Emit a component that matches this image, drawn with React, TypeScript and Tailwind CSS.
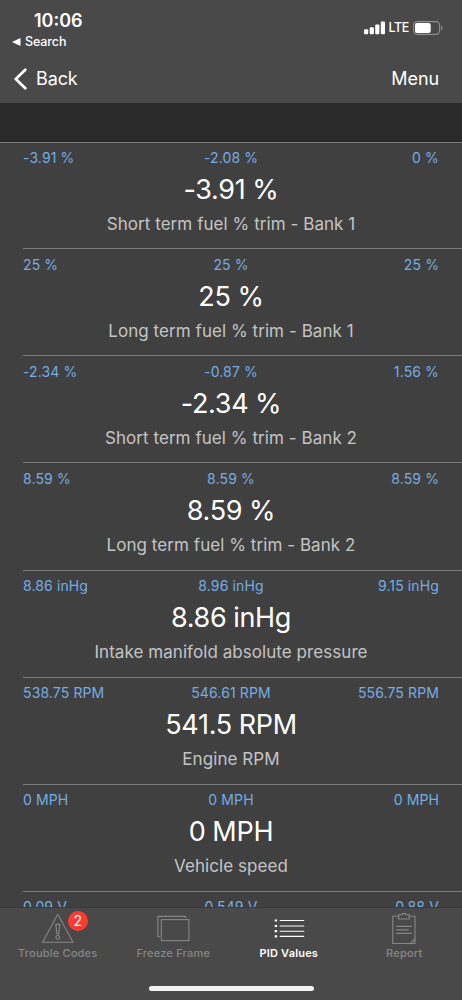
import type { ReactNode } from "react";
import clsx from "clsx";

type Pid = {
  min: string;
  avg: string;
  max: string;
  value: string;
  name: string;
};

const PIDS: Pid[] = [
  { min: "-3.91 %", avg: "-2.08 %", max: "0 %", value: "-3.91 %", name: "Short term fuel % trim - Bank 1" },
  { min: "25 %", avg: "25 %", max: "25 %", value: "25 %", name: "Long term fuel % trim - Bank 1" },
  { min: "-2.34 %", avg: "-0.87 %", max: "1.56 %", value: "-2.34 %", name: "Short term fuel % trim - Bank 2" },
  { min: "8.59 %", avg: "8.59 %", max: "8.59 %", value: "8.59 %", name: "Long term fuel % trim - Bank 2" },
  { min: "8.86 inHg", avg: "8.96 inHg", max: "9.15 inHg", value: "8.86 inHg", name: "Intake manifold absolute pressure" },
  { min: "538.75 RPM", avg: "546.61 RPM", max: "556.75 RPM", value: "541.5 RPM", name: "Engine RPM" },
  { min: "0 MPH", avg: "0 MPH", max: "0 MPH", value: "0 MPH", name: "Vehicle speed" },
  { min: "0.09 V", avg: "0.549 V", max: "0.88 V", value: "", name: "" },
];

function StatusBar() {
  return (
    <div className="flex h-[54px] justify-between">
      <div className="pl-3">
        <div className="mt-[10px] pl-[22px] text-[18px] leading-[22px] font-semibold">10:06</div>
        <div className="mt-px flex items-center gap-1 text-[12.5px] leading-[18px] font-medium tracking-[-0.1px]">
          <svg width="9" height="8" viewBox="0 0 9 8" fill="currentColor">
            <path d="M0 4 8.5 0v8z" />
          </svg>
          Search
        </div>
      </div>
      <div className="mt-[20px] mr-[19px] flex h-4 items-center">
        <svg width="22" height="14" viewBox="0 0 22 14" fill="currentColor">
          <rect x="0" y="8.3" width="4.2" height="5" rx="1" />
          <rect x="5.7" y="6.2" width="4.2" height="7.1" rx="1" />
          <rect x="11.2" y="3.5" width="4.2" height="9.8" rx="1" />
          <rect x="16.8" y="0.6" width="4.2" height="12.7" rx="1" />
        </svg>
        <span className="ml-[3px] text-[12.5px] leading-4 font-medium tracking-[-0.4px]">LTE</span>
        <svg className="ml-[4px]" width="30" height="14" viewBox="0 0 30 14">
          <rect x="0.6" y="0.6" width="26" height="12.8" rx="3.6" fill="none" stroke="#8e8e8e" strokeWidth="1.1" />
          <rect x="2" y="2" width="15.7" height="10" rx="2" fill="#fff" />
          <path d="M28 4.8c1.9.6 1.9 3.8 0 4.4z" fill="#8e8e8e" />
        </svg>
      </div>
    </div>
  );
}

function NavBar() {
  return (
    <div className="flex h-[49px] items-center justify-between pr-[23px] pl-3.5 text-[18px] tracking-[-0.1px] text-white">
      <button className="flex items-center gap-[9px]">
        <svg width="13" height="22" viewBox="0 0 13 22" fill="none" stroke="currentColor" strokeWidth="2.7" strokeLinecap="round" strokeLinejoin="round">
          <path d="M11.3 1.8 1.8 11l9.5 9.2" />
        </svg>
        Back
      </button>
      <button>Menu</button>
    </div>
  );
}

function PidRow({ pid, first }: { pid: Pid; first: boolean }) {
  return (
    <li className={clsx("shrink-0", first ? "h-[106.3px] border-t border-[#7b7b7b]" : "h-[107.1px]")}>
      <div className={clsx("ml-[23px] h-full pr-[23px]", first ? "pt-[5px]" : "border-t border-[#7b7b7b] pt-[5.6px]")}>
        <div className="grid grid-cols-3 text-[14px] leading-5 tracking-[0.12px] text-[#74ade4]">
          <span>{pid.min}</span>
          <span className="text-center">{pid.avg}</span>
          <span className="text-right">{pid.max}</span>
        </div>
        <div className="mt-1 text-center text-[27px] leading-9 tracking-[-0.3px] text-white [word-spacing:-0.5px]">{pid.value}</div>
        <div className="mt-1 text-center text-[17px] leading-6 tracking-[0.06px] text-[#c4c4c4]">{pid.name}</div>
      </div>
    </li>
  );
}

function Tab({ label, active, badge, children }: { label: string; active?: boolean; badge?: number; children: ReactNode }) {
  return (
    <button className={clsx("flex flex-1 flex-col items-center pt-[4px]", active ? "text-white" : "text-[#868686]")}>
      <span className="relative">
        <svg width="34" height="34" viewBox="0 0 34 34" fill="none" stroke="currentColor" strokeWidth="1.1">
          {children}
        </svg>
        {badge && (
          <span className="absolute top-[-1.5px] left-[27px] flex size-5 items-center justify-center rounded-full bg-[#ff3b30] text-[14px] text-white">
            {badge}
          </span>
        )}
      </span>
      <span className={clsx("text-[11px] leading-[14px] tracking-[0.2px] whitespace-nowrap", active ? "font-semibold" : "font-medium")}>{label}</span>
    </button>
  );
}

function TabBar() {
  return (
    <nav className="h-[93px] shrink-0 border-t border-[#3a3a3a] bg-[#494949]">
      <div className="flex h-[78px]">
        <Tab label="Trouble Codes" badge={2}>
          <path d="M16.8 2.3 32 30.3H1.6z" strokeLinejoin="round" />
          <path d="M14.8 12.4h4l-1.1 9.6h-1.8z" />
          <circle cx="16.8" cy="25.4" r="1.9" />
        </Tab>
        <Tab label="Freeze Frame">
          <path d="M4.2 24.8H1.9V4.4h27.7v1.8" />
          <rect x="5.3" y="7.6" width="27.6" height="21" />
        </Tab>
        <Tab label="PID Values" active>
          <path d="M7.7 8.5h24.5M7.7 14h24.5M7.7 19.2h24.5M7.7 24.4h24.5" />
          <path d="M2.7 8.5h2.4M2.7 14h2.4M2.7 19.2h2.4M2.7 24.4h2.4" strokeWidth="2.2" />
        </Tab>
        <Tab label="Report">
          <path d="M11.5 4.3H5.8v27.2h17.8l4.4-4.6V4.3h-5.7M23.6 31.5l.6-.4V31l3.8-4.1v4.6z" />
          <path d="M11.6 2.7h3.8V1.5h3v1.2h3.8v4.3H11.6z" />
          <path d="M9.2 14.4h15.5M9.2 17.9h12.5M9.2 21.4h15.5" />
        </Tab>
      </div>
      <div className="mx-auto h-[5px] w-[165px] rounded-full bg-[#f2f2f2]" />
    </nav>
  );
}

export default function App() {
  return (
    <div className="flex h-[1000px] w-[462px] flex-col overflow-hidden bg-[#404040] font-['Inter',sans-serif] text-white">
      <header className="h-[103px] shrink-0 bg-[#494949]">
        <StatusBar />
        <NavBar />
      </header>
      <div className="h-[39px] shrink-0 bg-[#2a2a2a]" />
      <ul className="flex min-h-0 flex-1 flex-col overflow-hidden">
        {PIDS.map((pid, i) => (
          <PidRow key={i} pid={pid} first={i === 0} />
        ))}
      </ul>
      <TabBar />
    </div>
  );
}
